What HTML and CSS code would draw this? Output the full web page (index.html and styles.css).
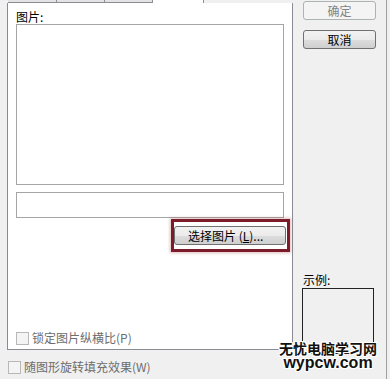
FILE: index.html
```html
<!DOCTYPE html>
<html lang="zh-CN">
<head>
    <meta charset="UTF-8">
    <title>填充效果 - 图片</title>
    <link rel="stylesheet" href="styles.css">
</head>
<body>

    <div class="dialog">
        <div class="main">
            <!-- tab strip, only the bottom of the tabs shows -->
            <div class="tabs">
                <span class="tab"></span>
                <span class="tab"></span>
                <span class="tab"></span>
                <span class="tab active"></span>
            </div>

            <!-- picture page -->
            <div class="page">
                <div class="label">图片:</div>
                <div class="listbox"></div>
                <div class="textbox"></div>
                <div class="btn-row">
                    <span class="mark">
                        <button class="btn wide">选择图片 (<u>L</u>)...</button>
                    </span>
                </div>
                <label class="check off page-check"><span class="box"></span>锁定图片纵横比(P)</label>
            </div>

            <label class="check off outer-check"><span class="box"></span>随图形旋转填充效果(W)</label>
        </div>

        <div class="side">
            <button class="btn" disabled>确定</button>
            <button class="btn">取消</button>
            <div class="sample-label">示例:</div>
            <div class="sample"></div>
        </div>

        <div class="watermark">
            <div class="wm-cn">无忧电脑学习网</div>
            <div class="wm-en">wypcw.com</div>
        </div>
    </div>

</body>
</html>
```

FILE: styles.css
```css
* {
    margin: 0;
    padding: 0;
    box-sizing: border-box;
}
body {
    background: #f0f0f0;
    font-family: "Noto Sans CJK SC", "DejaVu Sans", sans-serif;
    font-size: 12px;
    color: #000;
}
.dialog {
    position: relative;
    display: flex;
    width: 387px;
    height: 379px;
    padding-left: 7px;
    border-right: 1px solid #a0a0a0;
    overflow: hidden;
}
.main {
    width: 286px;
    display: flex;
    flex-direction: column;
}
.tabs {
    display: flex;
    height: 3px;
    padding-left: 1px;
}
.tab {
    width: 48px;
    height: 3px;
    background: #e3e3e3;
    border-right: 1px solid #8e8f8f;
    border-bottom: 1px solid #898c95;
}
.tab:first-child {
    width: 49px;
}
.tab.active {
    width: 51px;
    background: #fff;
    border-bottom: 0;
}
.page {
    height: 347px;
    background: #fff;
    border: 1px solid #898c95;
    border-top: 0;
    padding: 6px 8px 0 8px;
    display: flex;
    flex-direction: column;
}
.label {
    line-height: 15px;
    height: 15px;
}
.listbox {
    height: 161px;
    border: 1px solid #a5a5a5;
    background: #fff;
}
.textbox {
    margin-top: 7px;
    height: 26px;
    border: 1px solid #a5a5a5;
    background: #fff;
}
.btn-row {
    display: flex;
    justify-content: flex-end;
    margin-top: 8px;
    margin-right: -2px;
}
.mark {
    position: relative;
    display: flex;
}
/* red frame drawn over the screenshot */
.mark::before {
    content: "";
    position: absolute;
    left: -3px;
    right: -4px;
    top: -7px;
    bottom: -7px;
    border: 3px solid #7c1c2b;
    box-shadow: 0 0 3px 1px rgba(160, 60, 70, 0.35);
}
.btn {
    width: 73px;
    height: 19px;
    border: 1px solid #707070;
    border-radius: 3px;
    background: linear-gradient(#f2f2f2 0%, #ebebeb 50%, #dddddd 51%, #cfcfcf 100%);
    font-family: "Noto Sans CJK SC", "DejaVu Sans", sans-serif;
    font-size: 12px;
    line-height: 16px;
    color: #000;
}
.btn:disabled {
    border-color: #adb2b5;
    background: #f4f4f4;
    color: #838383;
}
.btn.wide {
    width: 112px;
    text-align: left;
    padding-left: 13px;
}
.btn u {
    text-decoration: underline;
}
.check {
    display: flex;
    align-items: center;
    gap: 3px;
    line-height: 14px;
}
.check.off {
    color: #6d6d6d;
}
.box {
    width: 13px;
    height: 13px;
    border: 1px solid #b8b8b8;
    background: #f4f4f4;
}
.page-check {
    margin-top: auto;
    margin-bottom: 4px;
}
.outer-check {
    margin-top: 10px;
    margin-left: 1px;
}
.side {
    display: flex;
    flex-direction: column;
    padding-left: 10px;
    padding-top: 1px;
}
.side .btn + .btn {
    margin-top: 10px;
}
.sample-label {
    margin-top: 223px;
    line-height: 15px;
}
.sample {
    margin-top: 1px;
    margin-left: -1px;
    width: 72px;
    height: 66px;
    border: 1px solid #222;
    background: #f0f0f0;
}
/* site watermark stamped on the picture */
.watermark {
    position: absolute;
    left: 278px;
    top: 341px;
    width: 100px;
    text-align: center;
    font-weight: bold;
    color: #111;
    text-shadow: -1px -1px 0 #fff, 1px -1px 0 #fff, -1px 1px 0 #fff, 1px 1px 0 #fff, 0 1px 0 #fff, 0 -1px 0 #fff, 1px 0 0 #fff, -1px 0 0 #fff;
}
.wm-cn {
    font-size: 14px;
    line-height: 15px;
    height: 15px;
}
.wm-en {
    font-family: "Liberation Sans", Arial, sans-serif;
    font-size: 16px;
    line-height: 14px;
    height: 14px;
}
```
